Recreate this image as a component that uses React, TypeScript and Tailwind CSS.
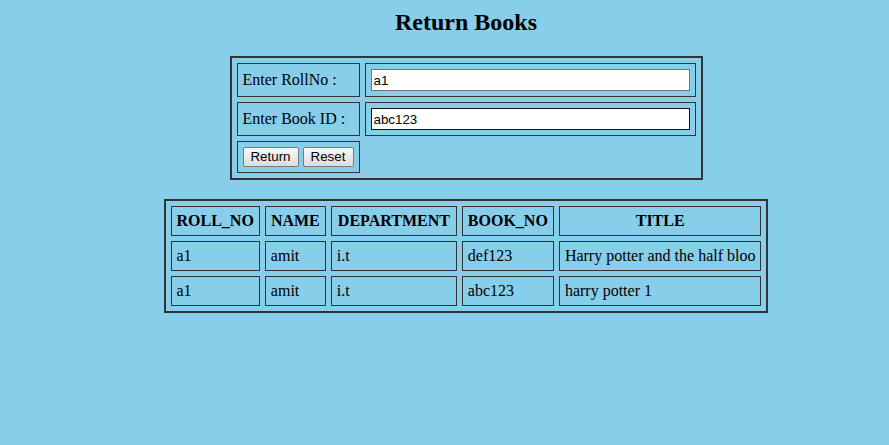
import React from 'react';

const rows = [
  { roll: 'a1', name: 'amit', dept: 'i.t', book: 'def123', title: 'Harry potter and the half bloo' },
  { roll: 'a1', name: 'amit', dept: 'i.t', book: 'abc123', title: 'harry potter 1' },
];

const cell = 'border border-[#333] p-[5px] leading-[18px]';

export default function App() {
  return (
    <div className="min-h-[445px] w-full bg-[#87ceeb] font-['Liberation_Serif','Times_New_Roman',serif] text-[16px] text-black">
      <div className="flex flex-col items-center pl-[43px]">
        <h2 className="mt-[9px] mb-[20px] text-[24px] font-bold leading-[27px]">Return Books</h2>

        {/* Form */}
        <table className="border-2 border-[#333] border-separate border-spacing-[5px]">
          <tbody>
            <tr>
              <td className={`${cell} w-[123px] align-middle`}>Enter RollNo :</td>
              <td className={cell}>
                <input
                  type="text"
                  defaultValue="a1"
                  className="block h-[22px] w-[319px] border border-[#767676] bg-white px-[2px] font-['Liberation_Sans',Arial,sans-serif] text-[13.33px] outline-none"
                />
              </td>
            </tr>
            <tr>
              <td className={`${cell} align-middle`}>Enter Book ID :</td>
              <td className={cell}>
                <input
                  type="text"
                  defaultValue="abc123"
                  className="block h-[22px] w-[319px] border border-[#111] bg-white px-[2px] font-['Liberation_Sans',Arial,sans-serif] text-[13.33px] outline-none"
                />
              </td>
            </tr>
            <tr>
              <td className={cell}>
                <div className="flex gap-[4px]">
                  <button className="h-[20px] w-[56px] rounded-[2px] border border-[#7a7a7a] bg-gradient-to-b from-[#f8f8f8] to-[#dcdcdc] font-['Liberation_Sans',Arial,sans-serif] text-[13.33px] leading-[18px] text-black">
                    Return
                  </button>
                  <button className="h-[20px] w-[51px] rounded-[2px] border border-[#7a7a7a] bg-gradient-to-b from-[#f8f8f8] to-[#dcdcdc] font-['Liberation_Sans',Arial,sans-serif] text-[13.33px] leading-[18px] text-black">
                    Reset
                  </button>
                </div>
              </td>
            </tr>
          </tbody>
        </table>

        {/* Issued books */}
        <table className="mt-[19px] border-2 border-[#333] border-separate border-spacing-[5px]">
          <thead>
            <tr>
              <th className={`${cell} w-[89px] font-bold text-center`}>ROLL_NO</th>
              <th className={`${cell} w-[61px] font-bold text-center`}>NAME</th>
              <th className={`${cell} w-[126px] font-bold text-center`}>DEPARTMENT</th>
              <th className={`${cell} w-[92px] font-bold text-center`}>BOOK_NO</th>
              <th className={`${cell} w-[202px] font-bold text-center`}>TITLE</th>
            </tr>
          </thead>
          <tbody>
            {rows.map((r, i) => (
              <tr key={i}>
                <td className={`${cell} text-left`}>{r.roll}</td>
                <td className={`${cell} text-left`}>{r.name}</td>
                <td className={`${cell} text-left`}>{r.dept}</td>
                <td className={`${cell} text-left`}>{r.book}</td>
                <td className={`${cell} text-left whitespace-nowrap`}>{r.title}</td>
              </tr>
            ))}
          </tbody>
        </table>
      </div>
    </div>
  );
}
